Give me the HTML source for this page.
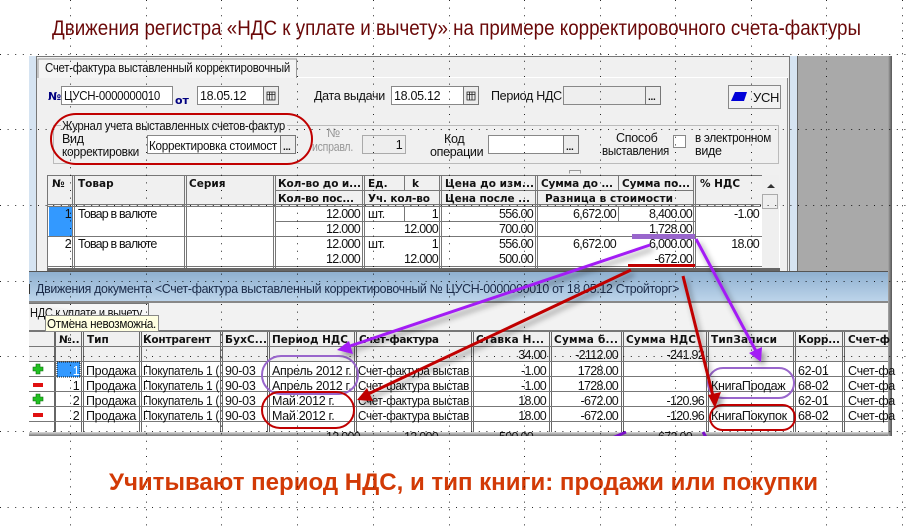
<!DOCTYPE html>
<html><head><meta charset="utf-8"><style>
html,body{margin:0;padding:0;background:#fff;width:912px;height:529px;overflow:hidden}
svg{display:block}
text{font-family:"Liberation Sans",sans-serif;font-size:12.5px;letter-spacing:-.3px;fill:#111}
.n{font-size:12.5px;letter-spacing:-.7px;text-anchor:end}
.h{font-family:"DejaVu Sans",sans-serif;font-weight:bold;font-size:10.5px;letter-spacing:0;fill:#111}
.g{fill:#999}
.btn{fill:#ececec;stroke:#777;stroke-width:1}
.inp{fill:#fff;stroke:#888;stroke-width:1}
</style></head><body>
<svg width="912" height="529" viewBox="0 0 912 529" xmlns="http://www.w3.org/2000/svg">
<defs>
<filter id="s" x="-20%" y="-20%" width="150%" height="150%"><feDropShadow dx="3" dy="4" stdDeviation="3" flood-color="#000" flood-opacity=".4"/></filter>
<linearGradient id="tb" x1="0" y1="0" x2="0" y2="1"><stop offset="0" stop-color="#8fb0d0"/><stop offset="1" stop-color="#bcd4ea"/></linearGradient>
<linearGradient id="rs" x1="0" y1="0" x2="1" y2="0"><stop offset="0" stop-color="#a8a8a8"/><stop offset="1" stop-color="#555"/></linearGradient>
<linearGradient id="bs" x1="0" y1="0" x2="0" y2="1"><stop offset="0" stop-color="#ddd"/><stop offset="1" stop-color="#777"/></linearGradient>
<clipPath id="band"><rect x="29" y="431" width="859" height="5"/></clipPath>
</defs>

<text x="52" y="35" textLength="809" lengthAdjust="spacingAndGlyphs" style="font-size:21px;letter-spacing:0;fill:#6a0808">Движения регистра «НДС к уплате и вычету» на примере корректировочного счета-фактуры</text>
<text x="109" y="490" textLength="709" lengthAdjust="spacingAndGlyphs" style="font-size:24px;letter-spacing:0;font-weight:bold;fill:#d23a06">Учитывают период НДС, и тип книги: продажи или покупки</text>

<!-- top window -->
<rect x="29" y="56" width="863" height="215" fill="#a9a9a9"/>
<rect x="888" y="56" width="4" height="215" fill="url(#rs)"/>
<rect x="29" y="56" width="7" height="215" fill="#d6e4f2"/>
<rect x="790" y="56" width="7" height="215" fill="#d6e4f2"/>
<rect x="797" y="56" width="1" height="215" fill="#666"/>
<rect x="36" y="56" width="754" height="215" fill="#f0f0f0"/>
<path d="M36 56.500H789.500V271" fill="none" stroke="#777"/>
<path d="M36.500 56V271" stroke="#777"/>
<path d="M297 77.500H787.500V271" fill="none" stroke="#fff"/>
<path d="M787.500 78V271" stroke="#888"/>
<path d="M38 78V59H296.500V78" fill="#f4f4f4" stroke="#999"/>
<text x="45" y="72" textLength="245" lengthAdjust="spacingAndGlyphs">Счет-фактура выставленный корректировочный</text>

<text x="48" y="100" class="h" style="fill:#000080;font-size:11px">№</text>
<rect x="61.500" y="86.500" width="111" height="18" class="inp"/>
<text x="64" y="100" textLength="96" lengthAdjust="spacingAndGlyphs">ЦУСН-0000000010</text>
<text x="175" y="104" class="h" style="fill:#000080;font-size:11px">от</text>
<rect x="197.500" y="86.500" width="66" height="18" class="inp"/>
<text x="200" y="100">18.05.12</text>
<rect x="263.500" y="86.500" width="15" height="18" class="btn"/>
<path d="M267 92h8v8h-8zM267 94.500h8M269.500 92v8M272 92v8" fill="none" stroke="#222" stroke-width=".8"/>
<text x="314" y="100">Дата выдачи</text>
<rect x="391.500" y="86.500" width="72" height="18" class="inp"/>
<text x="394" y="100">18.05.12</text>
<rect x="463.500" y="86.500" width="15" height="18" class="btn"/>
<path d="M467 92h8v8h-8zM467 94.500h8M469.500 92v8M472 92v8" fill="none" stroke="#222" stroke-width=".8"/>
<text x="491" y="100">Период НДС</text>
<rect x="563.500" y="86.500" width="82" height="18" fill="#eee" stroke="#888"/>
<rect x="645.500" y="86.500" width="15" height="18" class="btn"/>
<text x="648" y="100" style="font-weight:bold;font-size:10px">...</text>
<rect x="728.500" y="85.500" width="52" height="23" fill="#f2f2f2" stroke="#888"/>
<path d="M731 101l4-9h12l-3 9z" fill="#0000d8"/>
<text x="753" y="102" style="font-size:13px">УСН</text>

<rect x="53.500" y="125.500" width="725" height="38" fill="none" stroke="#bbb"/>
<rect x="61" y="122" width="226" height="8" fill="#f0f0f0"/>
<text x="62" y="130" textLength="223" lengthAdjust="spacingAndGlyphs">Журнал учета выставленных счетов-фактур</text>
<text x="62" y="143">Вид</text>
<text x="62" y="156" textLength="77" lengthAdjust="spacingAndGlyphs">корректировки</text>
<rect x="147.500" y="135.500" width="133" height="18" class="inp"/>
<text x="149" y="150" textLength="128" lengthAdjust="spacingAndGlyphs">Корректировка стоимост</text>
<rect x="280.500" y="135.500" width="15" height="18" class="btn"/>
<text x="283" y="150" style="font-weight:bold;font-size:10px">...</text>
<text x="327" y="137" class="g">№</text>
<text x="312" y="151" class="g" textLength="41" lengthAdjust="spacingAndGlyphs">исправл.</text>
<rect x="362.500" y="135.500" width="43" height="18" fill="#eee" stroke="#aaa"/>
<text x="402" y="149" class="n">1</text>
<text x="444" y="143">Код</text>
<text x="430" y="156">операции</text>
<rect x="488.500" y="135.500" width="75" height="18" class="inp"/>
<rect x="563.500" y="135.500" width="15" height="18" class="btn"/>
<text x="566" y="150" style="font-weight:bold;font-size:10px">...</text>
<text x="616" y="142">Способ</text>
<text x="602" y="155" textLength="67" lengthAdjust="spacingAndGlyphs">выставления</text>
<rect x="673.500" y="135.500" width="12" height="12" class="inp"/>
<text x="695" y="142" textLength="76" lengthAdjust="spacingAndGlyphs">в электронном</text>
<text x="695" y="155">виде</text>
<path d="M569.500 173.500v-3h11v3" fill="none" stroke="#999"/>

<!-- top table -->
<rect x="47" y="175" width="733" height="96" fill="#fff"/>
<rect x="47" y="175" width="733" height="31" fill="#f0f0f0"/>
<rect x="762" y="175" width="17" height="96" fill="#efefef"/>
<rect x="762.500" y="194.500" width="15" height="14" fill="#eee" stroke="#aaa"/>
<path d="M767 188l4-4 4 4z" fill="#333"/>
<rect x="49" y="206" width="23" height="30" fill="#3399ff"/>
<path d="M47.500 175V271M72.500 175V271M74.500 175V271M184.500 175V271M186.500 175V271M273.500 175V271M275.500 175V271M362.500 175V271M364.500 175V271M441.500 175V271M439.500 175V271M535.500 175V271M537.500 175V271M695.500 175V271M693.500 175V271M404.500 175V190M404.500 206V221M618.500 175V190M618.500 206V221M47 175.500H762M275 190.500H693M47 204.500H761M47 206.500H761M275 221.500H696M47 236.500H762M47 266.500H762" fill="none" stroke="#777"/>
<rect x="47" y="268" width="733" height="3" fill="#666"/>

<text x="52" y="187" class="h">№</text>
<text x="78" y="187" class="h">Товар</text>
<text x="189" y="187" class="h">Серия</text>
<text x="278" y="187" class="h" textLength="83">Кол-во до и...</text>
<text x="278" y="202" class="h" textLength="76">Кол-во пос...</text>
<text x="368" y="187" class="h">Ед.</text>
<text x="412" y="187" class="h">k</text>
<text x="368" y="202" class="h" textLength="62">Уч. кол-во</text>
<text x="445" y="187" class="h" textLength="89">Цена до изм...</text>
<text x="445" y="202" class="h" textLength="85">Цена после ...</text>
<text x="541" y="187" class="h" textLength="72">Сумма до ...</text>
<text x="622" y="187" class="h" textLength="68">Сумма по...</text>
<text x="545" y="202" class="h" textLength="128">Разница в стоимости</text>
<text x="700" y="187" class="h">% НДС</text>

<text x="71" y="218" class="n">1</text>
<text x="78" y="218" textLength="79">Товар в валюте</text>
<text x="360" y="218" class="n">12.000</text><text x="360" y="233" class="n">12.000</text>
<text x="368" y="218">шт.</text><text x="438" y="218" class="n">1</text><text x="438" y="233" class="n">12.000</text>
<text x="533" y="218" class="n">556.00</text><text x="533" y="233" class="n">700.00</text>
<text x="616" y="218" class="n">6,672.00</text><text x="692" y="218" class="n">8,400.00</text><text x="692" y="233" class="n">1,728.00</text>
<text x="759" y="218" class="n">-1.00</text>
<text x="71" y="248" class="n">2</text>
<text x="78" y="248" textLength="79">Товар в валюте</text>
<text x="360" y="248" class="n">12.000</text><text x="360" y="263" class="n">12.000</text>
<text x="368" y="248">шт.</text><text x="438" y="248" class="n">1</text><text x="438" y="263" class="n">12.000</text>
<text x="533" y="248" class="n">556.00</text><text x="533" y="263" class="n">500.00</text>
<text x="616" y="248" class="n">6,672.00</text><text x="692" y="248" class="n">6,000.00</text><text x="692" y="263" class="n">-672.00</text>
<text x="759" y="248" class="n">18.00</text>

<!-- bottom window -->
<rect x="29" y="271" width="863" height="165" fill="#f0f0f0"/>
<rect x="29" y="271" width="863" height="1" fill="#555"/>
<rect x="29" y="272" width="859" height="29" fill="url(#tb)"/>
<rect x="29" y="301" width="859" height="2" fill="#888"/>
<text x="36" y="293" textLength="643" lengthAdjust="spacingAndGlyphs" style="fill:#1a2a48;font-size:12.500px">Движения документа &lt;Счет-фактура выставленный корректировочный № ЦУСН-0000000010 от 18.05.12 Стройторг&gt;</text>
<path d="M29.500 284V294" stroke="#333"/>
<rect x="29" y="303" width="859" height="27" fill="#f2f2f2"/>
<path d="M29 303.500H148.500V320" fill="#f7f7f7" stroke="#777"/>
<text x="30" y="317" textLength="112" lengthAdjust="spacingAndGlyphs">НДС к уплате и вычету</text>

<rect x="29" y="330" width="859" height="102" fill="#fff"/>
<rect x="29" y="330" width="859" height="32" fill="#f0f0f0"/>
<rect x="29" y="432" width="859" height="4" fill="url(#bs)"/>
<path d="M55.500 330V432M54.500 330V432M81.500 330V432M83.500 330V432M139.500 330V432M141.500 330V432M220.500 330V432M222.500 330V432M267.500 330V432M269.500 330V432M354.500 330V432M356.500 330V432M471.500 330V432M473.500 330V432M549.500 330V432M551.500 330V432M621.500 330V432M623.500 330V432M706.500 330V432M708.500 330V432M793.500 330V432M795.500 330V432M842.500 330V432M844.500 330V432" fill="none" stroke="#666"/>
<path d="M29 330.500H888M29 331.500H888M29 346.500H888M29 361.500H888M29 376.500H888M29 391.500H888M29 406.500H888M29 421.500H888" fill="none" stroke="#777"/>
<rect x="888" y="271" width="4" height="165" fill="url(#rs)"/>

<g clip-path="url(#band)">
<text x="360" y="441" class="n">12.000</text><text x="438" y="441" class="n">12.000</text><text x="533" y="441" class="n">500.00</text><text x="692" y="441" class="n">-672.00</text>
<path d="M610 439L626 432M703 432L707 439" stroke="#7a10c8" stroke-width="3" fill="none"/>
</g>

<rect x="57" y="362" width="23" height="15" fill="#3399ff" stroke="#111" stroke-dasharray="1 1"/>

<text x="59" y="343" class="h">№..</text>
<text x="87" y="343" class="h">Тип</text>
<text x="143" y="343" class="h" textLength="68">Контрагент</text>
<text x="225" y="343" class="h" textLength="42">БухС...</text>
<text x="272" y="343" class="h" textLength="76">Период НДС</text>
<text x="359" y="343" class="h" textLength="80">Счет-фактура</text>
<text x="476" y="343" class="h" textLength="68">Ставка Н...</text>
<text x="554" y="343" class="h" textLength="64">Сумма б...</text>
<text x="626" y="343" class="h" textLength="70">Сумма НДС</text>
<text x="711" y="343" class="h" textLength="66">ТипЗаписи</text>
<text x="798" y="343" class="h" textLength="42">Корр...</text>
<text x="848" y="343" class="h" textLength="42">Счет-ф</text>

<text x="546" y="359" class="n">34.00</text><text x="618" y="359" class="n">-2112.00</text><text x="704" y="359" class="n">-241.92</text>

<path d="M36 364h4v3h3v4h-3v3h-4v-3h-3v-4h3z" fill="#22c022" stroke="#0a6a0a" stroke-width=".6"/>
<rect x="33" y="383" width="10" height="4" fill="#e01010"/>
<path d="M36 394h4v3h3v4h-3v3h-4v-3h-3v-4h3z" fill="#22c022" stroke="#0a6a0a" stroke-width=".6"/>
<rect x="33" y="413" width="10" height="4" fill="#e01010"/>

<text x="79" y="375" class="n" style="fill:#fff">1</text><text x="79" y="390" class="n">1</text><text x="79" y="405" class="n">2</text><text x="79" y="420" class="n">2</text>
<text x="86" y="375">Продажа</text><text x="86" y="390">Продажа</text><text x="86" y="405">Продажа</text><text x="86" y="420">Продажа</text>
<text x="143" y="375" textLength="76" lengthAdjust="spacingAndGlyphs">Покупатель 1 (</text><text x="143" y="390" textLength="76" lengthAdjust="spacingAndGlyphs">Покупатель 1 (</text><text x="143" y="405" textLength="76" lengthAdjust="spacingAndGlyphs">Покупатель 1 (</text><text x="143" y="420" textLength="76" lengthAdjust="spacingAndGlyphs">Покупатель 1 (</text>
<text x="225" y="375">90-03</text><text x="225" y="390">90-03</text><text x="225" y="405">90-03</text><text x="225" y="420">90-03</text>
<text x="272" y="375">Апрель 2012 г.</text><text x="272" y="390">Апрель 2012 г.</text><text x="272" y="405">Май 2012 г.</text><text x="272" y="420">Май 2012 г.</text>
<text x="358" y="375" textLength="111" lengthAdjust="spacingAndGlyphs">Счет-фактура выстав</text><text x="358" y="390" textLength="111" lengthAdjust="spacingAndGlyphs">Счет-фактура выстав</text><text x="358" y="405" textLength="111" lengthAdjust="spacingAndGlyphs">Счет-фактура выстав</text><text x="358" y="420" textLength="111" lengthAdjust="spacingAndGlyphs">Счет-фактура выстав</text>
<text x="546" y="375" class="n">-1.00</text><text x="546" y="390" class="n">-1.00</text><text x="546" y="405" class="n">18.00</text><text x="546" y="420" class="n">18.00</text>
<text x="618" y="375" class="n">1728.00</text><text x="618" y="390" class="n">1728.00</text><text x="618" y="405" class="n">-672.00</text><text x="618" y="420" class="n">-672.00</text>
<text x="704" y="405" class="n">-120.96</text><text x="704" y="420" class="n">-120.96</text>
<text x="711" y="390">КнигаПродаж</text><text x="711" y="420">КнигаПокупок</text>
<text x="798" y="375">62-01</text><text x="798" y="390">68-02</text><text x="798" y="405">62-01</text><text x="798" y="420">68-02</text>
<text x="848" y="375">Счет-фа</text><text x="848" y="390">Счет-фа</text><text x="848" y="405">Счет-фа</text><text x="848" y="420">Счет-фа</text>

<rect x="45.500" y="315.500" width="113" height="16" fill="#ffffe1" stroke="#888"/>
<text x="47" y="328" textLength="109" lengthAdjust="spacingAndGlyphs" style="fill:#111">Отмена невозможна.</text>

<!-- dots -->
<path d="M0 54.500H912M0 129.500H912M0 205.500H912M0 281.500H912M0 356.500H912M0 431.500H912M0 507.500H912" stroke="#000" stroke-width="1" stroke-dasharray="1 6.600" fill="none" opacity=".85"/>
<path d="M70.500 0V529M146.500 0V529M221.500 0V529M297.500 0V529M373.500 0V529M449.500 0V529M524.500 0V529M600.500 0V529M675.500 0V529M751.500 0V529M826.500 0V529M902.500 0V529" stroke="#000" stroke-width="1" stroke-dasharray="1 6.600" fill="none" opacity=".85"/>

<!-- annotations -->
<rect x="51" y="114" width="261" height="50" rx="25" fill="none" stroke="#c00000" stroke-width="2"/>
<rect x="262" y="356" width="96" height="38" rx="19" fill="none" stroke="#9966cc" stroke-width="2"/>
<rect x="262" y="392" width="92" height="36" rx="18" fill="none" stroke="#c00000" stroke-width="2"/>
<rect x="708" y="368" width="86" height="30" rx="15" fill="none" stroke="#9966cc" stroke-width="2"/>
<rect x="710" y="405" width="85" height="25" rx="12.500" fill="none" stroke="#c00000" stroke-width="2"/>
<rect x="632" y="234" width="63" height="5" fill="#9966cc"/>
<rect x="628" y="264" width="67" height="3" fill="#c00000"/>
<g filter="url(#s)">
<path d="M650 245L347 347" stroke="#a31cf5" stroke-width="3" fill="none"/>
<path d="M337 350L349 341L353 354Z" fill="#a31cf5"/>
<path d="M696 239L757 353" stroke="#a31cf5" stroke-width="3" fill="none"/>
<path d="M761 362L749 353L762 347Z" fill="#a31cf5"/>
<path d="M631 270L366 395" stroke="#c00000" stroke-width="3" fill="none"/>
<path d="M357 400L367 388L373 401Z" fill="#c00000"/>
<path d="M683 276L713 396" stroke="#c00000" stroke-width="3" fill="none"/>
<path d="M715 408L708 395L721 392Z" fill="#c00000"/>
</g>
</svg>
</body></html>
